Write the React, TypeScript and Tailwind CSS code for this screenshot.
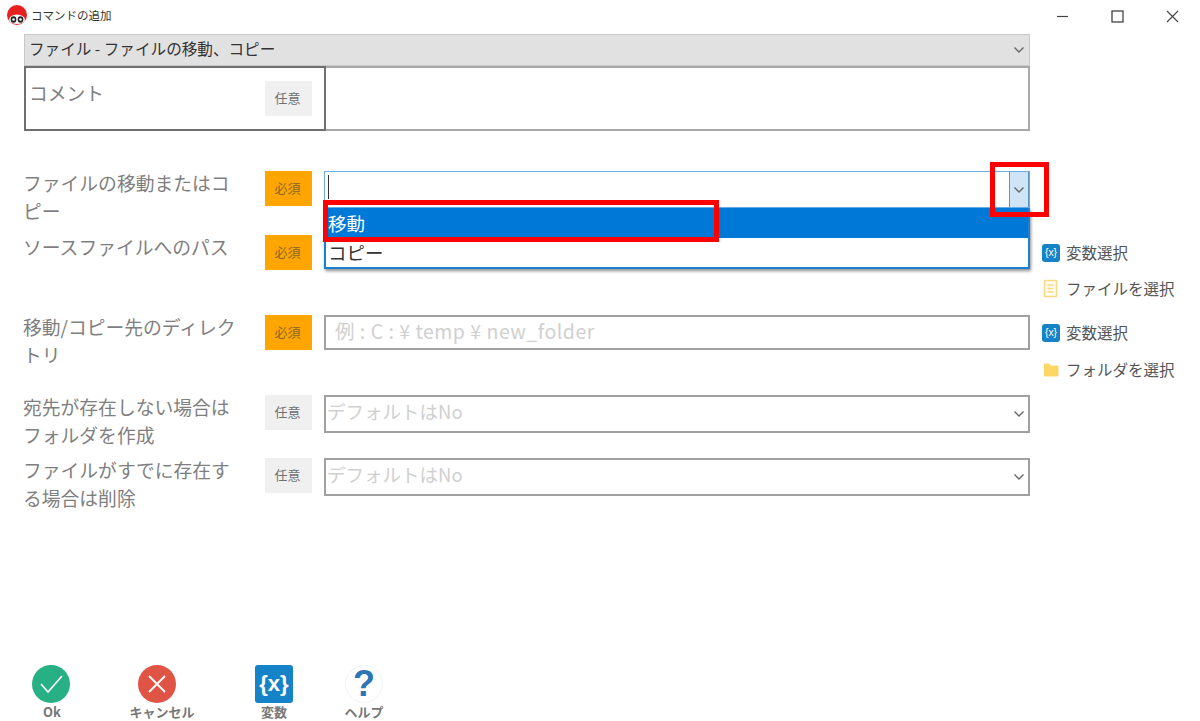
import React from "react";

function Chevron({ className = "" }: { className?: string }) {
  return (
    <svg width="12" height="8" viewBox="0 0 12 8" className={className}>
      <path d="M1.5 1.5 L6 6 L10.5 1.5" fill="none" stroke="#666" strokeWidth="1.4" />
    </svg>
  );
}

function VarIcon({ size = 18 }: { size?: number }) {
  return (
    <div
      className="bg-[#1683c8] rounded-[3px] flex items-center justify-center text-white font-['Liberation_Sans',sans-serif] shrink-0"
      style={{ width: size, height: size, fontSize: size * 0.58, fontWeight: size > 20 ? 700 : 400 }}
    >
      {"{x}"}
    </div>
  );
}

function FileIcon() {
  return (
    <svg width="18" height="20" viewBox="0 0 18 20" className="shrink-0">
      <rect x="2.5" y="1.5" width="12" height="16" fill="#fffdf2" stroke="#fcd77f" strokeWidth="1.4" />
      <path d="M5.5 6h6M5.5 9.5h6M5.5 13h6" stroke="#fcd77f" strokeWidth="1.3" />
    </svg>
  );
}

function FolderIcon() {
  return (
    <svg width="18" height="18" viewBox="0 0 18 18" className="shrink-0">
      <path d="M2 3.5 a1 1 0 0 1 1-1 h4 l1.5 2 h7 a1 1 0 0 1 1 1 v9 a1 1 0 0 1-1 1 h-12.500 a1 1 0 0 1-1-1z" fill="#fdd766" />
    </svg>
  );
}

function Badge({ required }: { required?: boolean }) {
  return (
    <div
      className={
        "w-[47px] h-[35px] shrink-0 flex items-center justify-center pb-[2px] pr-[2px] text-[13px] " +
        (required ? "bg-[#ffa500] text-[#8a6a2a]" : "bg-[#f0f0f0] text-[#707070]")
      }
    >
      {required ? "必須" : "任意"}
    </div>
  );
}

function Action({ icon, label }: { icon: React.ReactNode; label: string }) {
  return (
    <div className="flex items-center gap-[6px] h-[20px] text-[15.5px] text-[#555] leading-none whitespace-nowrap">
      <div className="w-[18px] flex justify-center">{icon}</div>
      {label}
    </div>
  );
}

function Row({
  label,
  required,
  height,
  children,
  actions,
}: {
  label: React.ReactNode;
  required?: boolean;
  height: string;
  children?: React.ReactNode;
  actions?: React.ReactNode;
}) {
  return (
    <div className={"flex items-start " + height}>
      <div className="w-[241px] pr-[22px] shrink-0 text-[18.8px] leading-[28px] text-[#7f7f7f] mt-[-2px] ml-[-1px] mr-[1px]">{label}</div>
      <Badge required={required} />
      <div className="ml-[12px] w-[706px] shrink-0">{children}</div>
      <div className="ml-[12px]">{actions}</div>
    </div>
  );
}

function SelectBox({ placeholder }: { placeholder: string }) {
  return (
    <div className="h-[38px] border-2 border-[#a0a0a0] flex items-center justify-between pl-[2px] pr-[2px] text-[18.5px] text-[#d0d0d0]">
      <span className="mt-[-4px] ml-[-1px]">{placeholder}</span>
      <Chevron className="mr-[1px]" />
    </div>
  );
}

export default function App() {
  return (
    <div className="w-[1200px] h-[721px] bg-white flex flex-col overflow-hidden relative font-['Noto_Sans_CJK_JP','Noto_Sans',sans-serif]">
      {/* Title bar */}
      <div className="h-[34px] flex items-start shrink-0">
        <svg width="22" height="22" viewBox="0 0 22 22" className="ml-[6px] mt-[4px] shrink-0">
          <circle cx="11" cy="11" r="10" fill="#e5201f" />
          <path d="M3 16 a8 5.500 0 0 1 16 0 a8 4 0 0 1-16 0z" fill="#f4f4f4" />
          <ellipse cx="7.500" cy="15.500" rx="2.800" ry="3.200" fill="#222" />
          <ellipse cx="14.500" cy="15.500" rx="2.800" ry="3.200" fill="#222" />
          <circle cx="7.500" cy="15.500" r="1.300" fill="#fff" />
          <circle cx="14.500" cy="15.500" r="1.300" fill="#fff" />
        </svg>
        <div className="ml-[3px] mt-[5px] text-[11.500px] leading-[20px] text-[#333]">コマンドの追加</div>
        <div className="ml-auto flex items-center mt-[10px] mr-[21px] gap-[42px]">
          <svg width="13" height="13" viewBox="0 0 13 13"><path d="M1 6.500h11" stroke="#444" strokeWidth="1.200" /></svg>
          <svg width="13" height="13" viewBox="0 0 13 13"><rect x="1" y="1" width="11" height="11" fill="none" stroke="#444" strokeWidth="1.300" /></svg>
          <svg width="13" height="13" viewBox="0 0 13 13"><path d="M1 1l11 11M12 1L1 12" stroke="#444" strokeWidth="1.100" /></svg>
        </div>
      </div>

      <div className="pl-[24px] flex flex-col shrink-0">
        {/* Top select */}
        <div className="w-[1006px] h-[32px] bg-[#e1e1e1] border border-[#c8c8c8] flex items-center justify-between pl-[4px] pr-[4px] text-[15.600px] text-[#333]">
          <span className="mt-[-2px]">ファイル - ファイルの移動、コピー</span>
          <Chevron />
        </div>
        {/* Comment */}
        <div className="w-[1006px] h-[65px] flex">
          <div className="w-[302px] h-full border-2 border-[#6f6f6f] flex items-start shrink-0">
            <div className="w-[239px] pl-[3px] text-[18.800px] leading-[28px] text-[#7f7f7f] mt-[11px]">コメント</div>
            <div className="mt-[13px]"><Badge /></div>
          </div>
          <div className="flex-1 border-2 border-l-0 border-[#a8a8a8]" />
        </div>

        <div className="mt-[40px] flex flex-col">
          <Row height="h-[64px]" required label={<>ファイルの移動またはコピー</>}>
            <div className="h-[37px] border border-[#6aaee8] flex items-stretch justify-between">
              <div className="ml-[3px] mt-[3px] w-px h-[24px] bg-[#333]" />
              <div className="w-[20px] bg-[#cfe4f7] border-l border-[#5b93c6] border-r flex items-center justify-center">
                <Chevron />
              </div>
            </div>
          </Row>
          <Row
            height="h-[80px]"
            required
            label="ソースファイルへのパス"
            actions={
              <div className="flex flex-col gap-[16px] pt-[8px]">
                <Action icon={<VarIcon />} label="変数選択" />
                <Action icon={<FileIcon />} label="ファイルを選択" />
              </div>
            }
          >
            <div className="h-[35px]" />
          </Row>
          <Row
            height="h-[80px]"
            required
            label="移動/コピー先のディレクトリ"
            actions={
              <div className="flex flex-col gap-[17px] pt-[8px]">
                <Action icon={<VarIcon />} label="変数選択" />
                <Action icon={<FolderIcon />} label="フォルダを選択" />
              </div>
            }
          >
            <div className="h-[35px] border-2 border-[#a0a0a0] flex items-center pl-[9px] text-[19.500px] tracking-[0.5px] text-[#d0d0d0] whitespace-pre">
              <span className="mt-[-3px]">例 : C : ¥ temp ¥ new_folder</span>
            </div>
          </Row>
          <Row height="h-[63px]" label="宛先が存在しない場合はフォルダを作成">
            <SelectBox placeholder="デフォルトはNo" />
          </Row>
          <Row height="h-[63px]" label="ファイルがすでに存在する場合は削除">
            <SelectBox placeholder="デフォルトはNo" />
          </Row>
        </div>
      </div>

      {/* Footer toolbar */}
      <div className="mt-auto mb-[1px] pl-[22px] flex items-start shrink-0 text-[13px] font-bold text-[#777] leading-[16px]">
        <div className="w-[60px] flex flex-col items-center gap-[1px]">
          <div className="w-[38px] h-[38px] mr-[2px] rounded-full bg-[#26b084] flex items-center justify-center">
            <svg width="26" height="22" viewBox="0 0 26 22"><path d="M3 11l7 8L24 3" fill="none" stroke="#fff" strokeWidth="1.600" /></svg>
          </div>
          Ok
        </div>
        <div className="ml-[50px] w-[60px] flex flex-col items-center gap-[1px] whitespace-nowrap">
          <div className="w-[38px] h-[38px] mr-[10px] rounded-full bg-[#df5445] flex items-center justify-center">
            <svg width="20" height="20" viewBox="0 0 20 20"><path d="M2 2l16 16M18 2L2 18" stroke="#fff" strokeWidth="1.800" /></svg>
          </div>
          キャンセル
        </div>
        <div className="ml-[52px] w-[60px] flex flex-col items-center gap-[1px]">
          <VarIcon size={38} />
          変数
        </div>
        <div className="ml-[30px] w-[60px] flex flex-col items-center gap-[1px]">
          <div className="w-[38px] h-[38px] rounded-full border border-[#f0f5fa] flex items-center justify-center text-[#2f75b5] text-[36px] font-bold leading-none font-['Liberation_Sans',sans-serif]">
            ?
          </div>
          ヘルプ
        </div>
      </div>

      {/* Open dropdown list */}
      <div className="absolute left-[324px] top-[208px] w-[706px] h-[61px] bg-white border-2 border-t-0 border-[#1d7fd0] shadow-[1px_2px_3px_rgba(0,0,0,0.45)] text-[18.500px] leading-[30px] text-[#333]">
        <div className="h-[30px] bg-[#0078d7] text-white pl-[2px]">移動</div>
        <div className="h-[29px] pl-[2px] mt-[-1px]">コピー</div>
      </div>

      {/* Red annotation boxes */}
      <div className="absolute left-[323px] top-[200px] w-[396px] h-[42px] border-[5px] border-[#ff0000]" />
      <div className="absolute left-[990px] top-[162px] w-[59px] h-[55px] border-[5px] border-[#ff0000]" />
    </div>
  );
}
